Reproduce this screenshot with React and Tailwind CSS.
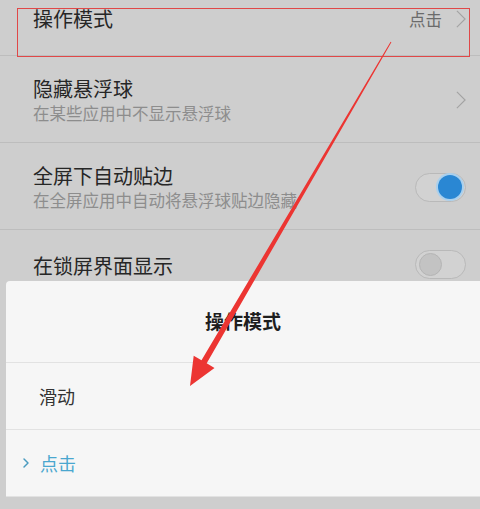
import { ChevronRight } from "lucide-react";

const font = { fontFamily: '"Noto Sans CJK SC", "Noto Sans", sans-serif' };

function Chevron({ className }) {
    return (
        <svg viewBox="0 0 12 22" className={className} fill="none" stroke="currentColor" strokeWidth="1.4">
            <polyline points="1,1 11,11 1,21" />
        </svg>
    );
}

function Toggle({ on }) {
    return (
        <div className="w-[51px] h-[29px] rounded-full border border-[#b9b9b9] bg-[#d2d2d2] flex items-center px-[3px]">
            {on ? (
                <div className="ml-auto w-[24px] h-[24px] rounded-full bg-[#2a87d3] ring-2 ring-[#a9d0ee]" />
            ) : (
                <div className="w-[23px] h-[23px] rounded-full bg-[#c3c3c3] border border-[#b5b5b5]" />
            )}
        </div>
    );
}

function SettingRow({ title, sub, right, className }) {
    return (
        <div className={"shrink-0 flex items-center justify-between pl-[33px] pr-[14px] border-b border-[#bdbdbd] " + className}>
            <div className="flex flex-col">
                <div className="text-[20px] leading-[26px] text-[#262626]">{title}</div>
                {sub && <div className="text-[16.5px] leading-[22px] text-[#8d8d8d]">{sub}</div>}
            </div>
            {right}
        </div>
    );
}

export default function App() {
    return (
        <div className="relative w-[480px] h-[509px] overflow-hidden bg-[#cecece]" style={font}>
            {/* dimmed settings list */}
            <div className="h-[281px] overflow-hidden flex flex-col">
                <div className="shrink-0 h-[56px] flex items-start justify-between pl-[33px] pr-[14px] pt-[5px] border-b border-[#bdbdbd]">
                    <div className="text-[20px] leading-[28px] text-[#262626]">操作模式</div>
                    <div className="flex items-center gap-[14px] pt-[3px]">
                        <span className="text-[16.5px] leading-[22px] text-[#6b6b6b]">点击</span>
                        <Chevron className="w-[10px] h-[18px] text-[#a3a3a3]" />
                    </div>
                </div>
                <SettingRow
                    className="h-[87px] pt-[2px]"
                    title="隐藏悬浮球"
                    sub="在某些应用中不显示悬浮球"
                    right={<Chevron className="w-[10px] h-[18px] text-[#a3a3a3]" />}
                />
                <SettingRow
                    className="h-[87px] pt-[2px]"
                    title="全屏下自动贴边"
                    sub="在全屏应用中自动将悬浮球贴边隐藏"
                    right={<Toggle on />}
                />
                <div className="shrink-0 h-[80px] flex items-start justify-between pl-[33px] pr-[14px] pt-[20px]">
                    <div className="pt-[2px] text-[20px] leading-[28px] text-[#262626]">在锁屏界面显示</div>
                    <Toggle />
                </div>
            </div>

            {/* bottom sheet */}
            <div className="ml-[6px] bg-[#f6f6f6] rounded-tl-[4px] flex flex-col">
                <div className="h-[82px] flex items-center justify-center border-b border-[#e2e2e2]">
                    <span className="text-[19px] font-bold text-[#1e1e1e]">操作模式</span>
                </div>
                <div className="h-[67px] flex items-center pl-[33px] border-b border-[#e2e2e2]">
                    <span className="text-[18px] text-[#333333]">滑动</span>
                </div>
                <div className="h-[67px] flex items-center pl-[12px] border-b border-[#e2e2e2]">
                    <ChevronRight className="w-[16px] h-[16px] text-[#4a9bbf]" strokeWidth={2.2} />
                    <span className="ml-[6px] text-[18px] text-[#4aa7cf]">点击</span>
                </div>
            </div>

            {/* annotation overlays */}
            <div className="absolute left-[17px] top-[8px] w-[453px] h-[49px] border border-[#e04848]" />
            <svg className="absolute left-0 top-0 w-[480px] h-[509px]" viewBox="0 0 480 509">
                <polygon
                    fill="#ec3532"
                    points="391.4,42.3 206.7,363.3 214.5,367.9 190,386 193.7,355.7 201.5,360.3 390.6,41.7"
                />
            </svg>
        </div>
    );
}
